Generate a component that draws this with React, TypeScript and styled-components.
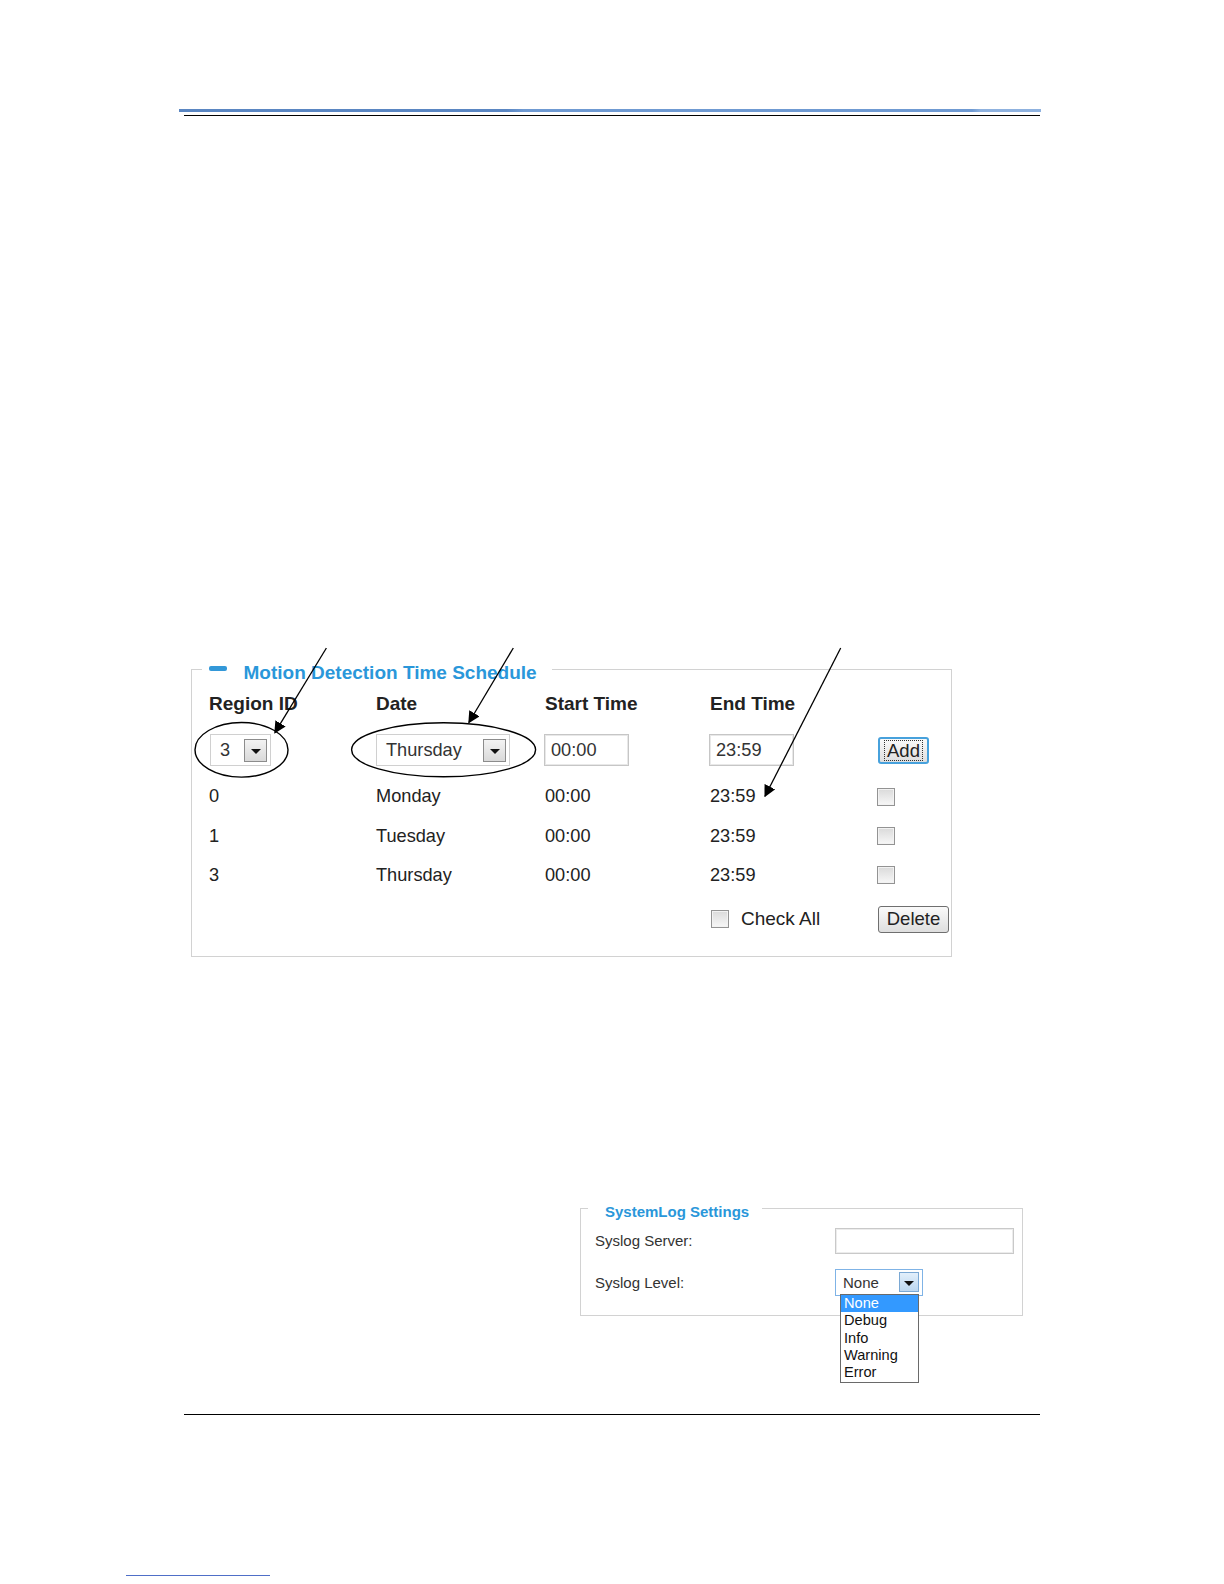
import React from "react";
import styled, { createGlobalStyle } from "styled-components";

const Global = createGlobalStyle`
  html, body { margin: 0; padding: 0; background: #fff; }
  body { font-family: "Liberation Sans", Arial, sans-serif; color: #222; }
  * { box-sizing: border-box; }
`;

const Page = styled.div`
  width: 1224px;
  min-height: 1584px;
  position: relative;
  overflow: hidden;
  display: flex;
  flex-direction: column;
`;

const TopRule = styled.div`
  margin-top: 109px;
  margin-left: 179px;
  width: 862px;
  height: 3px;
  background: linear-gradient(90deg, #5a86c2 0%, #5a86c2 38%, #6f9ad2 40%, #6f9ad2 92%, #8fb2df 93%, #8fb2df 100%);
`;

const Hairline = styled.div<{ $mt: number; $ml: number; $w: number; $color?: string }>`
  margin-top: ${(p) => p.$mt}px;
  margin-left: ${(p) => p.$ml}px;
  width: ${(p) => p.$w}px;
  height: 1px;
  background: ${(p) => p.$color || "#000"};
`;

/* ---------- Motion detection figure ---------- */

const Figure = styled.div<{ $mt: number; $ml: number; $w: number; $pt: number }>`
  position: relative;
  margin-top: ${(p) => p.$mt}px;
  margin-left: ${(p) => p.$ml}px;
  width: ${(p) => p.$w}px;
  padding-top: ${(p) => p.$pt}px;
`;

const Fieldset = styled.fieldset<{ $pad: string }>`
  margin: 0;
  min-width: 0;
  border: 1px solid #d2d2d2;
  padding: ${(p) => p.$pad};
`;

const Legend = styled.legend<{ $size: number; $lh: number; $pad: string; $ml: number }>`
  margin-left: ${(p) => p.$ml}px;
  padding: ${(p) => p.$pad};
  font-size: ${(p) => p.$size}px;
  line-height: ${(p) => p.$lh}px;
  font-weight: bold;
  color: #2a97da;
  display: flex;
  align-items: center;
  gap: 16.5px;
`;

const MinusIcon = styled.span`
  display: block;
  width: 18px;
  height: 5px;
  border-radius: 2px;
  background: #3398d8;
  margin-bottom: 10px;
`;

const Row = styled.div<{ $h: number; $mt: number }>`
  display: grid;
  grid-template-columns: 167px 169px 165px 168px 1fr;
  align-items: center;
  height: ${(p) => p.$h}px;
  margin-top: ${(p) => p.$mt}px;
  font-size: 18.2px;
  color: #222;
`;

const HeadCell = styled.div`
  font-weight: bold;
  font-size: 19px;
`;

const Cell = styled.div`
  display: flex;
  align-items: center;
`;

const SelectBox = styled.div<{ $w: number; $h: number; $focus?: boolean; $size: number; $pl: number; $ml?: number }>`
  position: relative;
  width: ${(p) => p.$w}px;
  height: ${(p) => p.$h}px;
  margin-left: ${(p) => p.$ml || 0}px;
  border: 1px solid ${(p) => (p.$focus ? "#7fb3e6" : "#d0d0d0")};
  background: #fff;
  display: flex;
  align-items: center;
  justify-content: space-between;
  padding: 0 3px 0 ${(p) => p.$pl}px;
  font-size: ${(p) => p.$size}px;
  color: #333;
`;

const DropBtn = styled.span<{ $s: number; $blue?: boolean }>`
  width: ${(p) => p.$s}px;
  height: ${(p) => p.$s}px;
  border: 1px solid ${(p) => (p.$blue ? "#7aa8d4" : "#8c8c8c")};
  background: ${(p) =>
    p.$blue ? "linear-gradient(#e2effb, #bcd7f0)" : "linear-gradient(#f3f3f3, #d9d9d9)"};
  display: flex;
  align-items: center;
  justify-content: center;
  &::after {
    content: "";
    border-left: 5px solid transparent;
    border-right: 5px solid transparent;
    border-top: 5px solid #111;
    margin-top: 2px;
  }
`;

const TextInput = styled.div<{ $w: number; $h: number }>`
  width: ${(p) => p.$w}px;
  height: ${(p) => p.$h}px;
  margin-left: -1px;
  border: 1px solid #c6c6c6;
  box-shadow: inset 0 0 0 1px #e8e8e8;
  background: #fff;
  display: flex;
  align-items: center;
  padding-left: 6px;
  font-size: 18.2px;
  color: #333;
`;

const Button = styled.div<{ $w: number; $focus?: boolean }>`
  width: ${(p) => p.$w}px;
  height: 27px;
  border: ${(p) => (p.$focus ? "2px solid #47a1dc" : "1px solid #6f6f6f")};
  border-radius: 3px;
  background: linear-gradient(#fafafa, #dedede);
  display: flex;
  align-items: center;
  justify-content: center;
  font-size: 18.5px;
  color: #222;
`;

const FocusRing = styled.span`
  border: 1px dotted #333;
  padding: 0 2px;
  line-height: 19px;
`;

const Check = styled.span<{ $ml?: number }>`
  display: inline-block;
  width: 18px;
  height: 18px;
  margin-left: ${(p) => p.$ml || 0}px;
  border: 1px solid #939393;
  background: linear-gradient(#dadada, #f7f7f7);
  box-shadow: inset 0 0 0 1px #f2f2f2;
`;

const CheckLabel = styled.span`
  margin-left: 12px;
  font-size: 19px;
`;

const Annotations = styled.svg`
  position: absolute;
  left: 0;
  top: 0;
  overflow: visible;
  pointer-events: none;
`;

/* ---------- SystemLog figure ---------- */

const LogRow = styled.div<{ $mt: number; $h: number }>`
  display: grid;
  grid-template-columns: 240px 1fr;
  align-items: center;
  height: ${(p) => p.$h}px;
  margin-top: ${(p) => p.$mt}px;
  font-size: 15px;
  color: #333;
`;

const LogInput = styled.div`
  width: 179px;
  height: 26px;
  border: 1px solid #c9c9c9;
  box-shadow: inset 0 0 0 1px #ececec;
  background: #fff;
`;

const DropList = styled.ul`
  position: absolute;
  left: 4px;
  top: calc(100% - 1px);
  width: 79px;
  margin: 0;
  padding: 0;
  list-style: none;
  border: 1px solid #6a6a6a;
  background: #fff;
  z-index: 2;
`;

const DropItem = styled.li<{ $active?: boolean }>`
  height: 17.4px;
  line-height: 17px;
  padding-left: 3px;
  font-size: 14.6px;
  color: ${(p) => (p.$active ? "#fff" : "#111")};
  background: ${(p) => (p.$active ? "#3399ff" : "transparent")};
`;

const rows = [
  { id: "0", day: "Monday" },
  { id: "1", day: "Tuesday" },
  { id: "3", day: "Thursday" },
];

export default function App() {
  return (
    <Page>
      <Global />
      <TopRule />
      <Hairline $mt={3} $ml={184} $w={856} />

      <Figure $mt={532} $ml={191} $w={761} $pt={6}>
        <Fieldset $pad="8px 0 22px 17px">
          <Legend $size={19} $lh={22} $pad="8px 15px 0 7px" $ml={-7}>
            <MinusIcon />
            Motion Detection Time Schedule
          </Legend>

          <Row $h={24} $mt={0}>
            <HeadCell>Region ID</HeadCell>
            <HeadCell>Date</HeadCell>
            <HeadCell>Start Time</HeadCell>
            <HeadCell>End Time</HeadCell>
            <div />
          </Row>

          <Row $h={34} $mt={17}>
            <Cell>
              <SelectBox $w={61} $h={32} $size={18.2} $pl={9} $ml={1}>
                3
                <DropBtn $s={23} />
              </SelectBox>
            </Cell>
            <Cell>
              <SelectBox $w={134} $h={32} $size={18.2} $pl={9}>
                Thursday
                <DropBtn $s={23} />
              </SelectBox>
            </Cell>
            <Cell>
              <TextInput $w={85} $h={32}>00:00</TextInput>
            </Cell>
            <Cell>
              <TextInput $w={85} $h={32}>23:59</TextInput>
            </Cell>
            <Cell>
              <Button $w={51} $focus>
                <FocusRing>Add</FocusRing>
              </Button>
            </Cell>
          </Row>

          {rows.map((r, i) => (
            <Row key={r.id + r.day} $h={39.4} $mt={i === 0 ? 10 : 0}>
              <Cell>{r.id}</Cell>
              <Cell>{r.day}</Cell>
              <Cell>00:00</Cell>
              <Cell>23:59</Cell>
              <Cell>
                <Check $ml={-1} />
              </Cell>
            </Row>
          ))}

          <Row $h={30} $mt={9}>
            <div />
            <div />
            <div />
            <Cell>
              <Check $ml={1} />
              <CheckLabel>Check All</CheckLabel>
            </Cell>
            <Cell>
              <Button $w={71}>Delete</Button>
            </Cell>
          </Row>
        </Fieldset>

        <Annotations width={761} height={320} viewBox="0 0 761 320">
          <defs>
            <marker
              id="arrow"
              viewBox="0 0 10 10"
              refX="9"
              refY="5"
              markerWidth="12"
              markerHeight="12"
              markerUnits="userSpaceOnUse"
              orient="auto"
            >
              <path d="M0 0 L10 5 L0 10 z" fill="#000" />
            </marker>
          </defs>
          <line x1={135.4} y1={0} x2={83.9} y2={84.6} stroke="#000" strokeWidth={1.3} markerEnd="url(#arrow)" />
          <line x1={322.3} y1={0} x2={277.9} y2={74.5} stroke="#000" strokeWidth={1.3} markerEnd="url(#arrow)" />
          <line x1={649.7} y1={0} x2={574} y2={148.3} stroke="#000" strokeWidth={1.3} markerEnd="url(#arrow)" />
          <ellipse cx={50.5} cy={101.8} rx={46.5} ry={27.3} fill="none" stroke="#000" strokeWidth={1.4} />
          <ellipse cx={252.6} cy={101.8} rx={92} ry={27} fill="none" stroke="#000" strokeWidth={1.4} />
        </Annotations>
      </Figure>

      <Figure $mt={239.4} $ml={580} $w={443} $pt={0}>
        <Fieldset $pad="7.3px 0 19px 14px">
          <Legend $size={15} $lh={18} $pad="6px 13px 0 17px" $ml={-7}>
            SystemLog Settings
          </Legend>
          <LogRow $mt={0} $h={26}>
            <span>Syslog Server:</span>
            <LogInput />
          </LogRow>
          <LogRow $mt={15} $h={27}>
            <span>Syslog Level:</span>
            <div>
              <SelectBox $w={88} $h={27} $size={15} $pl={7} $focus>
                None
                <DropBtn $s={20} $blue />
                <DropList>
                  <DropItem $active>None</DropItem>
                  <DropItem>Debug</DropItem>
                  <DropItem>Info</DropItem>
                  <DropItem>Warning</DropItem>
                  <DropItem>Error</DropItem>
                </DropList>
              </SelectBox>
            </div>
          </LogRow>
        </Fieldset>
      </Figure>

      <Hairline $mt={98} $ml={184} $w={856} />
      <Hairline $mt={160} $ml={126} $w={144} $color="#4f6fc8" />
    </Page>
  );
}
